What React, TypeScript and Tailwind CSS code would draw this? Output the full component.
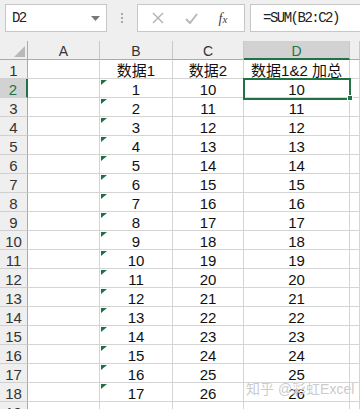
import React from "react";

const cols = ["A", "B", "C", "D", ""];
const colW = ["w-[72px]", "w-[73px]", "w-[71px]", "w-[106px]", "w-[10px]"];

const data = Array.from({ length: 17 }, (_, i) => [String(i + 1), String(i + 10), String(i + 10)]);

const GreenFlag = () => (
  <svg className="absolute left-[1px] top-[1px]" width="6" height="5" viewBox="0 0 6 5">
    <polygon points="0,0 6,0 0,5" fill="#1e7145" />
  </svg>
);

const Cell = ({ w, text, flag }: { w: string; text?: string; flag?: boolean }) => (
  <div className={`${w} relative h-[19px] shrink-0 border-r border-b border-[#d4d4d4] flex justify-center pt-[3px] leading-[15px]`}>
    {flag && <GreenFlag />}
    {text}
  </div>
);

const RowHead = ({ n, active }: { n: number; active?: boolean }) => (
  <div
    className={`w-[28px] h-[19px] shrink-0 border-b border-[#d0d0d0] flex justify-center pt-[3px] leading-[15px] text-[15px] ${
      active ? "bg-[#d2d2d2] text-[#217346] border-r-2 border-r-[#217346]" : "bg-[#efefef] text-[#333] border-r border-r-[#ababab]"
    }`}
  >
    {n}
  </div>
);

export default function App() {
  return (
    <div className="relative w-[360px] h-[409px] overflow-hidden bg-white text-[15px] text-[#111] font-['Liberation_Sans','Noto_Sans_CJK_SC',sans-serif]">
      {/* formula bar */}
      <div className="h-[41px] bg-[#efefef] flex items-start pt-[4px] pl-[5px]">
        <div className="w-[102px] h-[28px] bg-white border border-[#c6c6c6] flex items-center justify-between pl-[6px] pr-[6px]">
          <span className="font-['Liberation_Mono',monospace] text-[14px] tracking-[-1.6px] text-[#222]">D2</span>
          <svg width="9" height="5" viewBox="0 0 9 5">
            <polygon points="0,0 9,0 4.5,5" fill="#777" />
          </svg>
        </div>
        <div className="w-[30px] h-[28px] flex flex-col items-center justify-center gap-[2px]">
          <div className="w-[2px] h-[2px] bg-[#a8a8a8]" />
          <div className="w-[2px] h-[2px] bg-[#a8a8a8]" />
          <div className="w-[2px] h-[2px] bg-[#a8a8a8]" />
        </div>
        <div className="w-[108px] h-[28px] bg-white border border-[#c6c6c6] flex items-center">
          <div className="w-[40px] flex justify-center">
            <svg width="12" height="12" viewBox="0 0 12 12">
              <path d="M1 1 L11 11 M11 1 L1 11" stroke="#b0b0b0" strokeWidth="1.4" />
            </svg>
          </div>
          <div className="w-[26px] flex justify-center">
            <svg width="13" height="11" viewBox="0 0 13 11">
              <path d="M1 6 L5 10 L12 1" stroke="#b8b8b8" strokeWidth="2" fill="none" />
            </svg>
          </div>
          <div className="flex-1 flex justify-center pr-[2px] font-['Liberation_Serif',serif] italic text-[14px] text-[#444]">
            f<span className="text-[11px] mt-[3px]">x</span>
          </div>
        </div>
        <div className="ml-[5px] flex-1 h-[28px] bg-white border border-r-0 border-[#c6c6c6] flex items-center pl-[12px]">
          <span className="font-['Liberation_Mono',monospace] text-[14px] tracking-[-1.5px] text-[#222]">=SUM(B2:C2)</span>
        </div>
      </div>

      {/* column headers */}
      <div className="flex">
        <div className="relative w-[28px] h-[19px] shrink-0 bg-[#efefef] border-r border-b border-[#ababab]">
          <svg className="absolute right-[2px] bottom-[2px]" width="11" height="11" viewBox="0 0 11 11">
            <polygon points="11,0 11,11 0,11" fill="#b9b9b9" />
          </svg>
        </div>
        {cols.map((c, i) => (
          <div
            key={i}
            className={`${colW[i]} h-[19px] shrink-0 flex justify-center pt-[3px] leading-[15px] text-[14px] border-r border-r-[#c8c8c8] ${
              c === "D" ? "bg-[#d2d2d2] text-[#217346] border-b-2 border-b-[#217346]" : "bg-[#efefef] text-[#333] border-b border-b-[#ababab]"
            }`}
          >
            {c}
          </div>
        ))}
      </div>

      {/* row 1 */}
      <div className="flex">
        <RowHead n={1} />
        <Cell w={colW[0]} />
        <Cell w={colW[1]} text="数据1" />
        <Cell w={colW[2]} text="数据2" />
        <Cell w={colW[3]} text="数据1&2 加总" />
        <Cell w={colW[4]} />
      </div>

      {data.map((r, i) => (
        <div key={i} className="flex">
          <RowHead n={i + 2} active={i === 0} />
          <Cell w={colW[0]} />
          <Cell w={colW[1]} text={r[0]} flag />
          <Cell w={colW[2]} text={r[1]} />
          <Cell w={colW[3]} text={r[2]} />
          <Cell w={colW[4]} />
        </div>
      ))}

      <div className="flex">
        <RowHead n={19} />
        <Cell w={colW[0]} />
        <Cell w={colW[1]} />
        <Cell w={colW[2]} />
        <Cell w={colW[3]} />
        <Cell w={colW[4]} />
      </div>

      {/* selection on D2 */}
      <div className="absolute left-[243px] top-[78px] w-[108px] h-[22px] border-2 border-[#217346]" />
      <div className="absolute left-[347px] top-[95px] w-[6px] h-[6px] bg-[#217346] border border-white" />

      {/* watermark */}
      <div className="absolute left-[246px] top-[379px] text-[14px] text-[#bdbdbd]/80 [text-shadow:0_0_1px_#fff]">
        知乎 @彩虹Excel
      </div>
    </div>
  );
}
